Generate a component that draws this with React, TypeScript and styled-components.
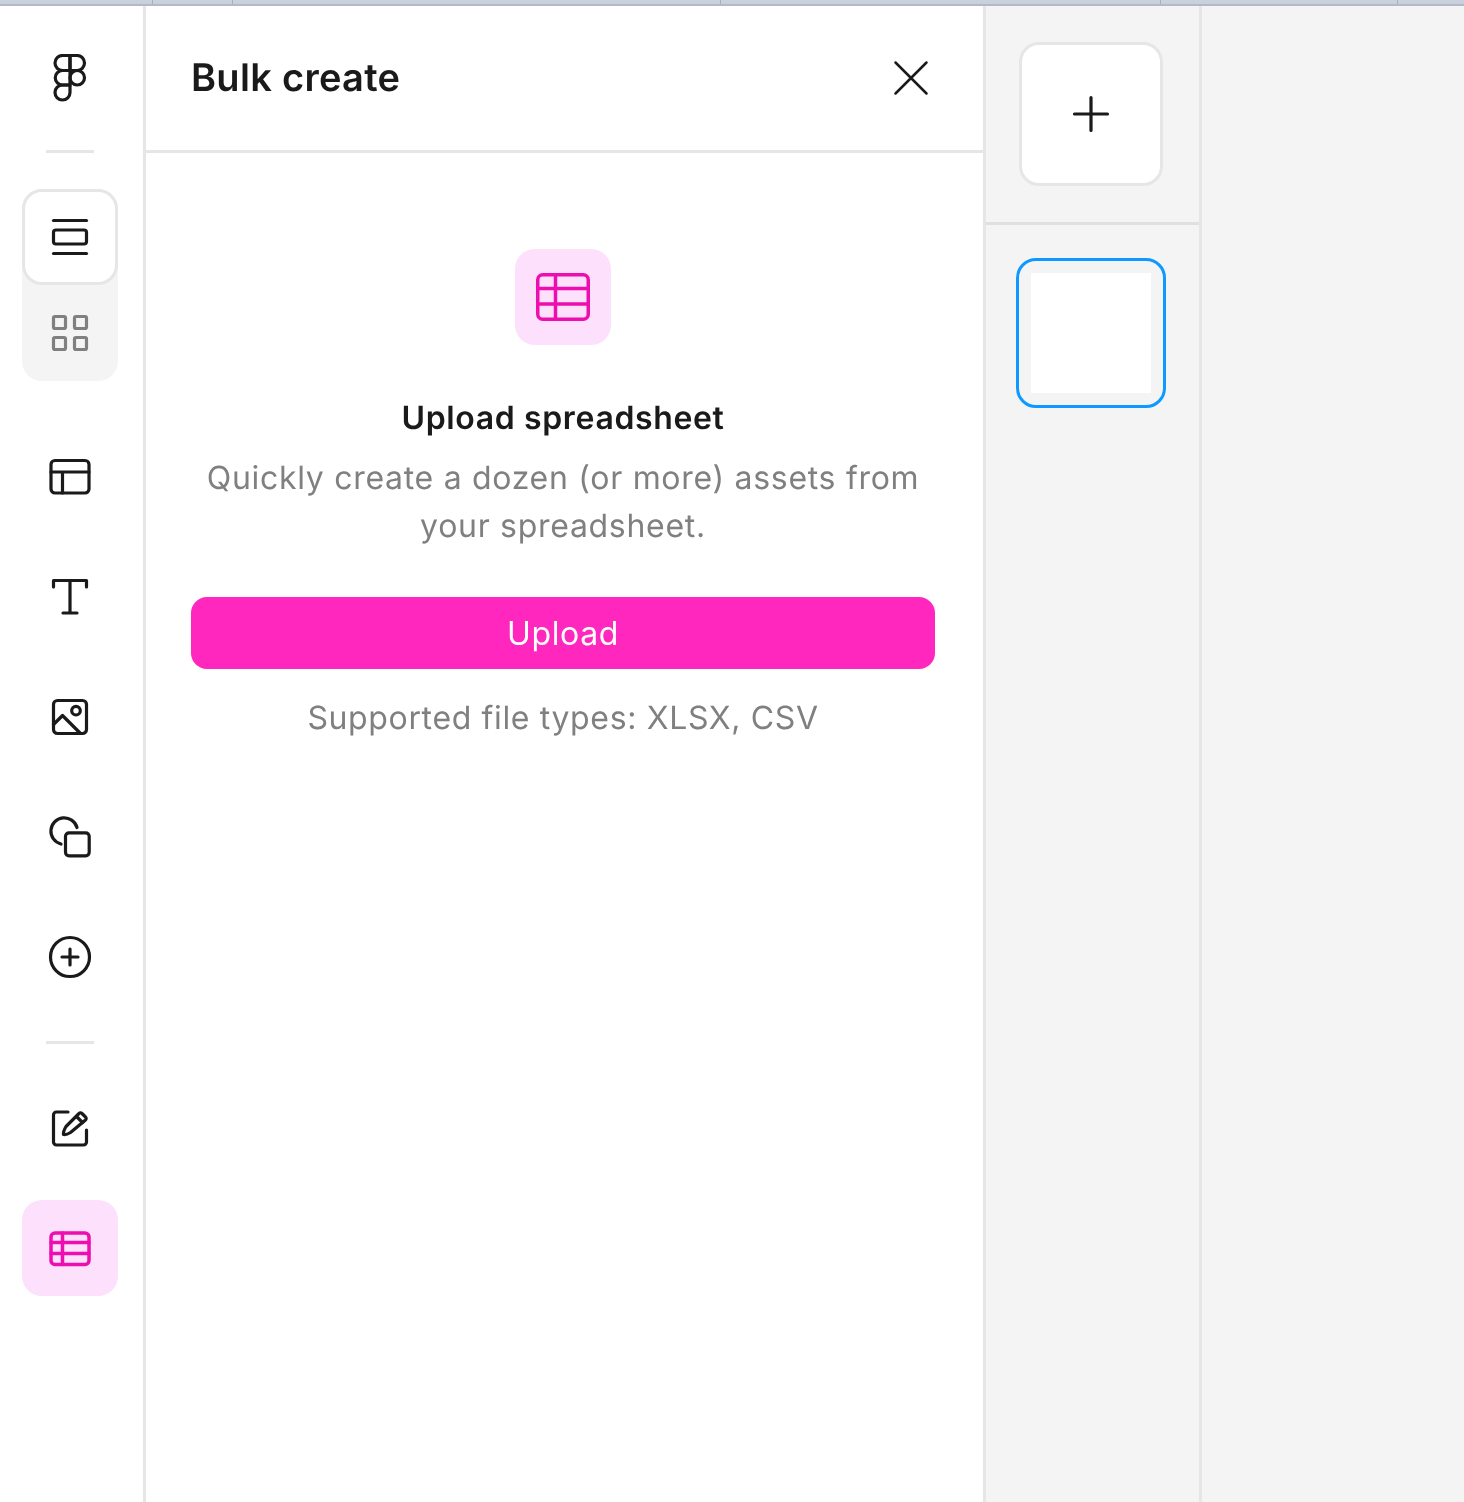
import React from "react";
import styled, { createGlobalStyle } from "styled-components";

const GlobalStyle = createGlobalStyle`
  html, body {
    margin: 0;
    padding: 0;
    height: 100%;
    background: #ffffff;
    font-family: Inter, "Noto Sans", sans-serif;
    text-rendering: geometricPrecision;
  }
  #root {
    height: 100%;
  }
`;

const Colors = {
  ink: "#1a1a1a",
  grey: "#808080",
  line: "#e6e6e6",
  canvas: "#f4f4f5",
  pink: "#ff27bd",
  pinkDark: "#ee0eb0",
  pinkLight: "#fde0fb",
  blue: "#0d99ff",
};

const Svg: React.FC<{ children: React.ReactNode; color?: string; stroke?: number }> = ({
  children,
  color = Colors.ink,
  stroke = 3.2,
}) => (
  <svg
    width="48"
    height="48"
    viewBox="0 0 48 48"
    fill="none"
    stroke={color}
    strokeWidth={stroke}
    strokeLinecap="round"
    strokeLinejoin="round"
  >
    {children}
  </svg>
);

const FigmaIcon = () => (
  <Svg>
    <path d="M24 1.500H16.500a7.500 7.500 0 0 0 0 15H24V1.500Z" />
    <path d="M24 1.500h7a7.500 7.500 0 0 1 0 15h-7V1.500Z" />
    <path d="M24 16.500h-7.500a7.250 7.250 0 0 0 0 14.500H24V16.500Z" />
    <circle cx="31.250" cy="23.750" r="7.250" />
    <path d="M24 31h-7.500a7.500 7.500 0 1 0 7.500 7.500V31Z" />
  </Svg>
);

const LayoutIcon = () => (
  <Svg>
    <path d="M7.500 7.500h33" />
    <rect x="7.500" y="17" width="33" height="14" rx="2.500" />
    <path d="M7.500 40.500h33" />
  </Svg>
);

const GridIcon = () => (
  <Svg color={Colors.grey}>
    <rect x="7.500" y="7.500" width="12" height="12" rx="1.500" />
    <rect x="28.500" y="7.500" width="12" height="12" rx="1.500" />
    <rect x="7.500" y="28.500" width="12" height="12" rx="1.500" />
    <rect x="28.500" y="28.500" width="12" height="12" rx="1.500" />
  </Svg>
);

const TemplateIcon = () => (
  <Svg>
    <rect x="5" y="7.500" width="38" height="32.500" rx="4" />
    <path d="M5 19h38M16.500 19v21" />
  </Svg>
);

const TextIcon = () => (
  <Svg>
    <path d="M7.500 14V7.500h33V14M24 7.500V40M17 40h14" />
  </Svg>
);

const ImageIcon = () => (
  <Svg>
    <rect x="7.500" y="7.500" width="33" height="33" rx="4" />
    <circle cx="30" cy="17.700" r="4.300" />
    <path d="M7.500 31.500l9-9L34 40" />
  </Svg>
);

const ShapesIcon = () => (
  <Svg>
    <path d="M15 31A13.300 13.300 0 1 1 31 14.500" />
    <rect x="19.500" y="19.800" width="23.700" height="23" rx="3.500" />
  </Svg>
);

const PlusCircleIcon = () => (
  <Svg>
    <circle cx="24" cy="24" r="19.500" />
    <path d="M24 16v16M16 24h16" />
  </Svg>
);

const EditIcon = () => (
  <Svg>
    <path d="M22 8H10.500a3 3 0 0 0-3 3v27a3 3 0 0 0 3 3h27a3 3 0 0 0 3-3V26" />
    <path d="M33 9.500a2 2 0 0 1 3 0l3.500 3.500a2 2 0 0 1 0 3L24.500 28.500Q20.500 31 17.500 30.500Q17 27.500 20 22.500Z" />
    <path d="M30.500 12.500l6 6" />
  </Svg>
);

const TableIcon = () => (
  <Svg color={Colors.pinkDark} stroke={3.5}>
    <rect x="5" y="9" width="38" height="31.500" rx="4" />
    <path d="M5 18.500h38M5 29.500h38M16.500 9v31.500" />
  </Svg>
);

const LargeTableIcon = () => (
  <svg width="54" height="48" viewBox="0 0 54 48" fill="none" stroke={Colors.pinkDark} strokeWidth="3.500">
    <rect x="1.750" y="1.750" width="50.500" height="44.500" rx="5" />
    <path d="M1.500 15.500h51M1.500 31h51M19.500 1.500v45" />
  </svg>
);

const CloseIcon = () => (
  <Svg stroke={2.5}>
    <path d="M8.500 8.500l31 31M39.500 8.500l-31 31" />
  </Svg>
);

const PlusIcon = () => (
  <Svg>
    <path d="M24 7.500v33M7.500 24h33" />
  </Svg>
);

const TopStrip = () => (
  <Strip>
    {[153, 80, 488, 440, 237].map((width) => (
      <StripCell key={width} $width={width} />
    ))}
  </Strip>
);

export default function App() {
  return (
    <Page>
      <GlobalStyle />
      <TopStrip />
      <Main>
        <Rail>
          <RailButton>
            <FigmaIcon />
          </RailButton>
          <RailDivider />
          <ViewToggle>
            <ToggleOption $active>
              <LayoutIcon />
            </ToggleOption>
            <ToggleOption>
              <GridIcon />
            </ToggleOption>
          </ViewToggle>
          <ToolGroup>
            <RailButton>
              <TemplateIcon />
            </RailButton>
            <RailButton>
              <TextIcon />
            </RailButton>
            <RailButton>
              <ImageIcon />
            </RailButton>
            <RailButton>
              <ShapesIcon />
            </RailButton>
            <RailButton>
              <PlusCircleIcon />
            </RailButton>
          </ToolGroup>
          <RailDivider />
          <ToolGroup>
            <RailButton>
              <EditIcon />
            </RailButton>
            <RailButton $selected>
              <TableIcon />
            </RailButton>
          </ToolGroup>
        </Rail>

        <Panel>
          <PanelHeader>
            <PanelTitle>Bulk create</PanelTitle>
            <CloseButton>
              <CloseIcon />
            </CloseButton>
          </PanelHeader>
          <PanelBody>
            <UploadBadge>
              <LargeTableIcon />
            </UploadBadge>
            <UploadTitle>Upload spreadsheet</UploadTitle>
            <UploadText>Quickly create a dozen (or more) assets from your spreadsheet.</UploadText>
            <UploadButton>Upload</UploadButton>
            <UploadNote>Supported file types: XLSX, CSV</UploadNote>
          </PanelBody>
        </Panel>

        <PageColumn>
          <AddSection>
            <AddPageButton>
              <PlusIcon />
            </AddPageButton>
          </AddSection>
          <ThumbSection>
            <Thumb>
              <ThumbSheet />
            </Thumb>
          </ThumbSection>
        </PageColumn>

        <Canvas />
      </Main>
    </Page>
  );
}

const Page = styled.div`
  display: flex;
  flex-direction: column;
  width: 1464px;
  height: 1502px;
  overflow: hidden;
  will-change: transform;
`;

const Strip = styled.div`
  display: flex;
  flex: none;
  height: 6px;
  box-sizing: border-box;
  background: #c9d1dd;
  border-bottom: 2px solid #b3bac6;
`;

const StripCell = styled.div<{ $width: number }>`
  box-sizing: border-box;
  width: ${({ $width }) => $width}px;
  height: 100%;
  border-right: 1px solid #a9b0bc;
`;

const Main = styled.div`
  display: flex;
  flex: 1;
  min-height: 0;
`;

const Rail = styled.nav`
  display: flex;
  flex: none;
  flex-direction: column;
  align-items: center;
  box-sizing: border-box;
  width: 146px;
  padding: 24px 3px 0 0;
  border-right: 3px solid ${Colors.line};
`;

const RailButton = styled.div<{ $selected?: boolean }>`
  display: flex;
  flex: none;
  align-items: center;
  justify-content: center;
  width: 96px;
  height: 96px;
  border-radius: 20px;
  background: ${({ $selected }) => ($selected ? Colors.pinkLight : "transparent")};
`;

const RailDivider = styled.div`
  flex: none;
  width: 48px;
  height: 3px;
  margin: 24px 0 36px;
  background: ${Colors.line};
`;

const ViewToggle = styled.div`
  flex: none;
  width: 96px;
  height: 192px;
  margin-bottom: 48px;
  border-radius: 20px;
  background: ${Colors.canvas};
`;

const ToggleOption = styled.div<{ $active?: boolean }>`
  display: flex;
  align-items: center;
  justify-content: center;
  box-sizing: border-box;
  width: 96px;
  height: 96px;
  border-radius: 20px;
  background: ${({ $active }) => ($active ? "#ffffff" : "transparent")};
  border: ${({ $active }) => ($active ? `3px solid ${Colors.line}` : "0")};
`;

const ToolGroup = styled.div`
  display: flex;
  flex: none;
  flex-direction: column;
  gap: 24px;
  margin-bottom: 12px;
`;

const Panel = styled.section`
  display: flex;
  flex: none;
  flex-direction: column;
  box-sizing: border-box;
  width: 840px;
  border-right: 3px solid ${Colors.line};
`;

const PanelHeader = styled.header`
  display: flex;
  flex: none;
  align-items: center;
  justify-content: space-between;
  box-sizing: border-box;
  height: 147px;
  padding: 0 48px 1px 45px;
  border-bottom: 3px solid ${Colors.line};
`;

const PanelTitle = styled.h1`
  margin: 0;
  font-size: 38px;
  font-weight: 600;
  line-height: 48px;
  letter-spacing: 0.3px;
  color: ${Colors.ink};
`;

const CloseButton = styled.div`
  display: flex;
  width: 48px;
  height: 48px;
`;

const PanelBody = styled.div`
  display: flex;
  flex-direction: column;
  align-items: center;
  padding: 96px 48px 0 45px;
`;

const UploadBadge = styled.div`
  display: flex;
  align-items: center;
  justify-content: center;
  width: 96px;
  height: 96px;
  margin-bottom: 49px;
  border-radius: 20px;
  background: ${Colors.pinkLight};
`;

const UploadTitle = styled.h2`
  margin: 0 0 12px;
  font-size: 32px;
  font-weight: 600;
  line-height: 48px;
  letter-spacing: 0.64px;
  color: ${Colors.ink};
`;

const UploadText = styled.p`
  margin: 0 0 47px;
  font-size: 32px;
  line-height: 48px;
  letter-spacing: 0.7px;
  text-align: center;
  color: ${Colors.grey};
`;

const UploadButton = styled.button`
  display: block;
  width: 100%;
  height: 72px;
  margin-bottom: 25px;
  padding: 0;
  border: 0;
  border-radius: 16px;
  background: ${Colors.pink};
  font-family: inherit;
  font-size: 32px;
  letter-spacing: 0.64px;
  color: #ffffff;
`;

const UploadNote = styled.p`
  margin: 0;
  font-size: 32px;
  line-height: 48px;
  letter-spacing: 0.64px;
  color: ${Colors.grey};
`;

const PageColumn = styled.aside`
  display: flex;
  flex: none;
  flex-direction: column;
  box-sizing: border-box;
  width: 216px;
  background: ${Colors.canvas};
  border-right: 3px solid ${Colors.line};
`;

const AddSection = styled.div`
  display: flex;
  flex: none;
  justify-content: center;
  padding: 36px 3px 36px 0;
  border-bottom: 3px solid #e0e0e0;
`;

const AddPageButton = styled.div`
  display: flex;
  align-items: center;
  justify-content: center;
  box-sizing: border-box;
  width: 144px;
  height: 144px;
  border: 3px solid ${Colors.line};
  border-radius: 20px;
  background: #ffffff;
`;

const ThumbSection = styled.div`
  display: flex;
  justify-content: center;
  padding: 33px 3px 0 0;
`;

const Thumb = styled.div`
  display: flex;
  align-items: center;
  justify-content: center;
  box-sizing: border-box;
  width: 150px;
  height: 150px;
  border: 3px solid ${Colors.blue};
  border-radius: 20px;
`;

const ThumbSheet = styled.div`
  width: 120px;
  height: 120px;
  background: #ffffff;
`;

const Canvas = styled.main`
  flex: 1;
  background: ${Colors.canvas};
`;
